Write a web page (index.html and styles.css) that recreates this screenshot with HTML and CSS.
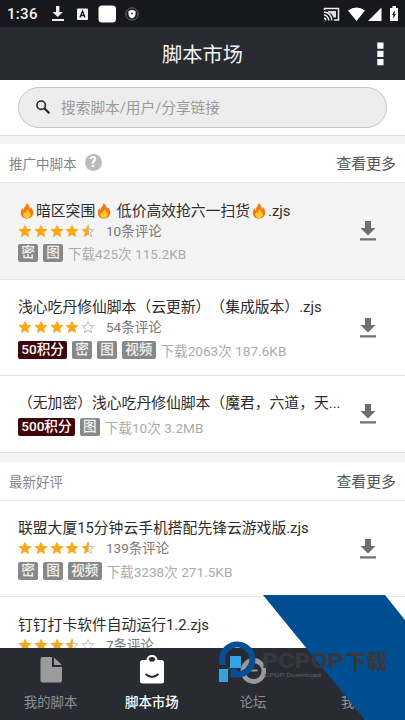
FILE: index.html
```html
<!DOCTYPE html>
<html lang="zh-CN">
<head>
<meta charset="utf-8">
<title>脚本市场</title>
<link rel="stylesheet" href="styles.css">
</head>
<body>
<svg class="defs" width="0" height="0">
  <symbol id="star" viewBox="0 0 14 14"><path d="M7 .5 8.900 4.800l4.800.5-3.600 3.100 1.100 4.900L7 10.800l-4.200 2.500 1.100-4.900L.3 5.300l4.800-.5z" fill="#f9a81b"/></symbol>
  <symbol id="star-empty" viewBox="0 0 14 14"><path d="M7 1.600 8.600 5.400l4.100.4-3.100 2.700.9 4L7 10.300l-3.500 2.200.9-4L1.300 5.800l4.100-.4z" fill="none" stroke="#b5b5b5" stroke-width=".9"/></symbol>
  <symbol id="star-half" viewBox="0 0 14 14"><path d="M7 1.600 8.600 5.400l4.100.4-3.100 2.700.9 4L7 10.300z" fill="none" stroke="#aaa" stroke-width=".8"/><path d="M7.500 .5v10.300H7l-4.200 2.500 1.100-4.900L.3 5.300l4.800-.5L7 .5z" fill="#f9a81b"/></symbol>
  <symbol id="download" viewBox="0 0 16 20"><path d="M5 0h6v7h4.500L8 14.500.5 7H5zM0 17.300h16v2.200H0z" fill="#707070"/></symbol>
  <symbol id="fire" viewBox="0 0 14 16"><path d="M6.300.3c2.600 1.200 3.600 3.500 3.500 5.500.6-.4 1-1 1-1.900 1.700 1.700 2.700 4 2.500 6.200-.2 3.400-2.900 5.600-6.300 5.600S1 13.500.8 10.200c-.2-2.300 1-4.200 1.800-5.500 0 1.200.4 2 1.100 2.400C3.300 4.600 6.500 3.200 6.300.3z" fill="#f57c14"/><path d="M7.300 5.800c.2 2 3.500 3.500 3.300 6.200-.1 2-1.600 3.300-3.600 3.300s-3.700-1.300-3.700-3.300c0-1.200.5-2 1.200-2.800.2.700.5 1.100 1 1.200 0-1.900 1.900-2.700 1.800-4.600z" fill="#fdc934"/></symbol>
</svg>
<div class="phone">
  <header class="status">
    <span class="time">1:36</span>
    <svg class="s-icons" width="90" height="18" viewBox="0 0 90 18">
      <path d="M6 1h3.400v6H13l-5.300 5L2.400 7H6zM2 14h12v2H2z" fill="#eee"/>
      <rect x="27" y="3.500" width="11" height="11.500" rx="1" fill="#f2f2f2"/>
      <path d="M30 12.500 32.500 6l2.500 6.500M31 10.500h3" fill="none" stroke="#15161a" stroke-width="1.300"/>
      <rect x="48.500" y=".5" width="17.500" height="17" rx="3.500" fill="#fff"/>
      <circle cx="82" cy="9" r="6.200" fill="none" stroke="#777" stroke-width=".9"/>
      <path d="M82 4.800 85.500 6v3q0 3-3.500 4.600Q78.500 12 78.500 9V6z" fill="#fff"/><circle cx="82" cy="8.500" r="1" fill="#333"/>
    </svg>
    <svg class="s-right" width="76" height="18" viewBox="0 0 76 18">
      <path d="M1.500 5V3.500h14V15H11" fill="none" stroke="#eee" stroke-width="1.500"/><path d="M5 6h8v6.500h-2.500Q9 8 5 7.500z" fill="#ddd"/>
      <path d="M1 7q7 .5 8 8.500M1 10q4 .5 5 5.500M1 13q2 .5 2 2.500" fill="none" stroke="#eee" stroke-width="1.300"/>
      <path d="M25 5.500q8.500-6 17 0L33.500 16zM45 16 58.500 2.500V16z" fill="#fff"/>
      <path d="M67 3h2.500V1H73v2h2v13h-8z" fill="#fff"/><path d="m72 5-3 5h1.500l-.5 4 3-5h-1.500z" fill="#15161a"/>
    </svg>
  </header>
  <div class="titlebar"><h1>脚本市场</h1>
    <svg class="more" width="7" height="24" viewBox="0 0 7 24"><path d="M.3.500h6.200v6.200H.3zM.3 8.800h6.200V15H.3zM.3 17h6.200v6.200H.3z" fill="#fff"/></svg>
  </div>
  <div class="searchwrap"><div class="search">
    <svg width="14" height="14" viewBox="0 0 14 14"><circle cx="5.200" cy="5.200" r="4.200" fill="none" stroke="#222" stroke-width="1.600"/><path d="m8.300 8.300 5 5" stroke="#222" stroke-width="2"/></svg>
    <span>搜索脚本/用户/分享链接</span>
  </div></div>
  <div class="gap first"></div>
  <div class="section"><span class="label">推广中脚本</span><span class="help">?</span><span class="all">查看更多</span></div>
  <div class="item shaded">
    <div class="body">
      <div class="name"><svg class="fire"><use href="#fire"/></svg>暗区突围<svg class="fire"><use href="#fire"/></svg> 低价高效抢六一扫货<svg class="fire"><use href="#fire"/></svg>.zjs</div>
      <div class="rate"><svg><use href="#star"/></svg><svg><use href="#star"/></svg><svg><use href="#star"/></svg><svg><use href="#star"/></svg><svg><use href="#star-half"/></svg><span>10条评论</span></div>
      <div class="meta"><b>密</b><b>图</b><span>下载425次 115.2KB</span></div>
    </div>
    <svg class="dl"><use href="#download"/></svg>
  </div>
  <div class="item">
    <div class="body">
      <div class="name">浅心吃丹修仙脚本（云更新）（集成版本）.zjs</div>
      <div class="rate"><svg><use href="#star"/></svg><svg><use href="#star"/></svg><svg><use href="#star"/></svg><svg><use href="#star"/></svg><svg><use href="#star-empty"/></svg><span>54条评论</span></div>
      <div class="meta"><b class="pts">50积分</b><b>密</b><b>图</b><b>视频</b><span>下载2063次 187.6KB</span></div>
    </div>
    <svg class="dl"><use href="#download"/></svg>
  </div>
  <div class="item short">
    <div class="body">
      <div class="name">（无加密）浅心吃丹修仙脚本（魔君，六道，天...</div>
      <div class="meta"><b class="pts">500积分</b><b>图</b><span>下载10次 3.2MB</span></div>
    </div>
    <svg class="dl"><use href="#download"/></svg>
  </div>
  <div class="gap"></div>
  <div class="section"><span class="label">最新好评</span><span class="all">查看更多</span></div>
  <div class="item">
    <div class="body">
      <div class="name">联盟大厦15分钟云手机搭配先锋云游戏版.zjs</div>
      <div class="rate"><svg><use href="#star"/></svg><svg><use href="#star"/></svg><svg><use href="#star"/></svg><svg><use href="#star"/></svg><svg><use href="#star-half"/></svg><span>139条评论</span></div>
      <div class="meta"><b>密</b><b>图</b><b>视频</b><span>下载3238次 271.5KB</span></div>
    </div>
    <svg class="dl"><use href="#download"/></svg>
  </div>
  <div class="item last">
    <div class="body">
      <div class="name">钉钉打卡软件自动运行1.2.zjs</div>
      <div class="rate"><svg><use href="#star"/></svg><svg><use href="#star"/></svg><svg><use href="#star"/></svg><svg><use href="#star-half"/></svg><svg><use href="#star-empty"/></svg><span>7条评论</span></div>
    </div>
  </div>
  <nav class="tabs">
    <div class="tab"><svg width="26" height="30" viewBox="0 0 26 30"><path d="M4.500 2H14v10h10v13.500q0 2-2 2H4.500q-2 0-2-2V4q0-2 2-2zM16 2.500 24 10h-8z" fill="#9b9b9b"/></svg><span>我的脚本</span></div>
    <div class="tab on"><svg width="26" height="30" viewBox="0 0 26 30"><path d="M8.500 7V5.500a4.500 4.500 0 0 1 9 0V7" fill="none" stroke="#fff" stroke-width="2.200"/><rect x="1" y="5" width="24" height="23.500" rx="2.500" fill="#fff"/><path d="M10.500 5a2.500 2.500 0 0 1 5 0v1.500h-5z" fill="#292b33"/><path d="M6.500 19q6.500 6 13 0" fill="none" stroke="#292b33" stroke-width="2"/></svg><span>脚本市场</span></div>
    <div class="tab"><svg width="26" height="30" viewBox="0 0 26 30"><circle cx="13.500" cy="16" r="10.500" fill="none" stroke="#999" stroke-width="4.800"/><path d="M9.500 15.500h8" stroke="#999" stroke-width="2"/></svg><span>论坛</span></div>
    <div class="tab"><svg width="26" height="30" viewBox="0 0 26 30"></svg><span>我的</span></div>
  </nav>
  <svg class="mark" width="405" height="125" viewBox="0 0 405 125">
    <path d="M263 0H385L405 25V125H365z" fill="#004e92"/>
    <path d="M222.300 70V64a15 15 0 1 1 15 15.500h-3.500v-6" fill="none" stroke="#064f94" stroke-width="6.200"/>
    <path d="M231 61h10v12h-10q-3 0-3 3v11h-9V74h8q3 0 3-3v-10z" fill="#35a3e3"/>
    <text x="262" y="73" class="brand" textLength="82" lengthAdjust="spacingAndGlyphs">PCPOP</text><text x="346" y="74" class="brand cn" textLength="41" lengthAdjust="spacingAndGlyphs">下载</text>
    <text x="264" y="82" class="sub" textLength="57" lengthAdjust="spacingAndGlyphs">CPOP Download</text>
  </svg>
</div>
</body>
</html>
```
FILE: styles.css
```css
* { box-sizing: border-box; }
body { margin: 0; font-family: Roboto, "Noto Sans CJK SC", sans-serif; background: #fff; }
.defs { position: absolute; }
.phone { position: relative; width: 405px; height: 720px; overflow: hidden; display: flex; flex-direction: column; }
.phone > * { flex-shrink: 0; }
.status { height: 27px; background: #17181d; display: flex; align-items: center; padding: 0 6px 0 7px; color: #f2f2f2; }
.time { font-size: 15px; width: 43px; letter-spacing: .3px; font-weight: 500; }
.s-right { margin-left: auto; }
.titlebar { height: 53px; background: #292b33; color: #f1f1f3; display: grid; grid-template-columns: 1fr auto 1fr; align-items: center; }
h1 { grid-column: 2; margin: 2px 0 0; font-size: 20.200px; font-weight: 400; line-height: 30px; }
.more { justify-self: end; margin-right: 21px; }
.searchwrap { height: 55px; padding: 7px 18px 0; }
.search { height: 41px; border: 1.500px solid #c4c4c4; border-radius: 21px; background: #ededed; display: flex; align-items: center; gap: 11px; padding-left: 17px; padding-bottom: 2px; color: #9a9a9a; font-size: 14.700px; }
.gap { height: 10px; background: #f4f4f4; border-top: 1px solid #dcdcdc; }
.gap.first { height: 9px; }
.section { height: 39px; border-bottom: 1px solid #e6e6e6; display: flex; align-items: center; padding: 0 9px 1px; font-size: 13.500px; color: #868686; }
.help { width: 17px; height: 17px; margin-left: 8px; border-radius: 50%; background: #bbb; color: #fff; font-size: 14px; font-weight: 700; line-height: 17px; text-align: center; }
.all { margin-left: auto; font-size: 14.900px; color: #555; }
.item { height: 96px; border-bottom: 1px solid #e4e4e4; display: flex; align-items: center; padding: 0 29px 0 18px; }
.item.shaded { height: 97px; background: #f4f4f4; }
.item.short { height: 76px; border-bottom: 0; }
.item.last { height: 51px; border: 0; align-items: flex-start; padding-top: 18px; overflow: hidden; }
.body { flex: 1; min-width: 0; padding-top: 4px; }
.short .body { padding-top: 3px; }
.last .body { padding: 0; }
.name { font-size: 14.800px; line-height: 23px; height: 21px; color: #2c2c2c; display: flex; align-items: center; white-space: pre; text-spacing-trim: space-all; }
.short .name { height: 23px; }
.fire { width: 14px; height: 16px; margin: 0 2px; }
.rate { height: 20px; margin-top: -1px; display: flex; align-items: center; gap: 1.800px; }
.rate svg { width: 14px; height: 14px; }
.rate span { margin-left: 9px; font-size: 13.500px; line-height: 20px; color: #777; }
.meta { height: 25px; display: flex; align-items: center; gap: 5px; font-size: 13.600px; color: #ababab; white-space: nowrap; }
.meta b { height: 18px; line-height: 17px; padding: 0 3.200px; border-radius: 2px; background: #888; color: #f2f2f2; font-weight: 500; }
.meta .pts { background: #3f0508; color: #fff; }
.dl { width: 16px; height: 20px; }
.tabs { height: 72px; background: #292b33; display: grid; grid-template-columns: repeat(4, 1fr); }
.tab { display: flex; flex-direction: column; align-items: center; padding-top: 7px; font-size: 13.400px; line-height: 20px; color: #8e8f93; }
.tab span { margin-top: 8px; }
.tab svg { width: 26px; height: 30px; }
.on { color: #fff; font-weight: 500; }
.mark { position: absolute; left: 0; top: 595px; }
.brand { font-family: Roboto, sans-serif; font-weight: 900; font-size: 20px; fill: #35383f; }
.cn { font-family: "Noto Sans CJK SC", sans-serif; }
.sub { font-family: Roboto, sans-serif; font-size: 6px; fill: #5c6066; }
```
